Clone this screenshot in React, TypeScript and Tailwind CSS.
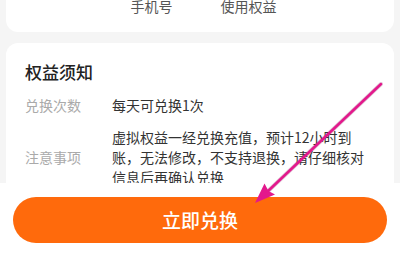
import React from 'react';

const font = { fontFamily: '"Noto Sans CJK SC", "Noto Sans", sans-serif' };

export default function App() {
  return (
    <div
      className="relative h-[253px] w-[400px] overflow-hidden bg-[#f5f5f5]"
      style={font}
    >
      {/* top card, mostly scrolled away */}
      <div className="-mt-[4px] mx-[6px] grid h-[36px] grid-cols-4 rounded-b-xl bg-white text-[14px] leading-[20px] text-[#555]">
        <div />
        <div className="text-center">手机号</div>
        <div className="text-center">使用权益</div>
        <div />
      </div>

      {/* notice card */}
      <div className="mx-[6px] mt-[11px] rounded-xl bg-white px-[19px] pt-[17px] pb-6">
        <h2 className="text-[17px] font-medium leading-[24px] text-[#222]">权益须知</h2>
        <div className="mt-[11px] flex items-center text-[14px] leading-[20px]">
          <span className="w-[87px] shrink-0 text-[#aaa]">兑换次数</span>
          <span className="text-[#333]">每天可兑换1次</span>
        </div>
        <div className="mt-[12px] flex items-center text-[14px] leading-[20px]">
          <span className="w-[87px] shrink-0 text-[#aaa]">注意事项</span>
          <span className="whitespace-nowrap text-[#333]">
            虚拟权益一经兑换充值，预计12小时到
            <br />
            账，无法修改，不支持退换，请仔细核对
            <br />
            信息后再确认兑换
          </span>
        </div>
      </div>

      {/* fixed footer */}
      <div className="absolute inset-x-0 bottom-0 h-[70px] bg-white px-[13px] pt-[14px]">
        <button className="flex h-[46px] w-full items-center justify-center rounded-full bg-[#ff6a0c] text-[19px] font-medium text-white">
          立即兑换
        </button>
      </div>

      {/* annotation arrow */}
      <svg
        className="pointer-events-none absolute inset-0"
        width="400"
        height="253"
        viewBox="0 0 400 253"
      >
        <line x1="381" y1="84" x2="266" y2="193" stroke="#7a1050" strokeOpacity="0.25" strokeWidth="4" strokeLinecap="round" />
        <line x1="381" y1="84" x2="266" y2="193" stroke="#e3188c" strokeWidth="2.5" strokeLinecap="round" />
        <polygon points="255,203 264.5,183.5 268.5,191 275,194.5" fill="#e3188c" />
      </svg>
    </div>
  );
}
